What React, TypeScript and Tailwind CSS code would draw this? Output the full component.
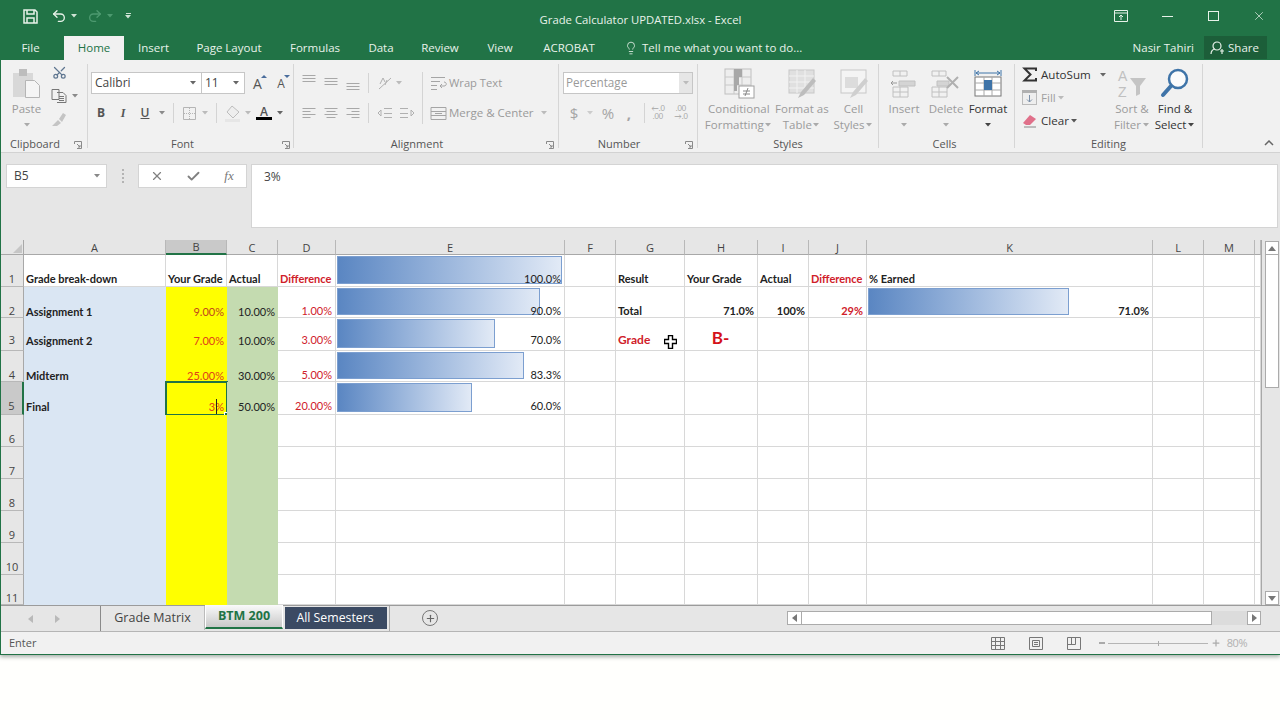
import React from "react";
import { Undo2, Redo2, Lightbulb, Scissors, X, Check, Plus } from "lucide-react";

const UI = "font-['Open_Sans','Noto_Sans',sans-serif]";
const CAL = "font-['Lato','Carlito',sans-serif]";

function Caret({ c = "#8a8a8a", w = 10 }: { c?: string; w?: number }) {
  return (
    <span className="inline-flex justify-center shrink-0" style={{ width: w }}>
      <svg width="6" height="4" viewBox="0 0 6 4"><path d="M0 0h6L3 3.5z" fill={c} /></svg>
    </span>
  );
}
function Slot({ w = 22, children }: { w?: number; children?: React.ReactNode }) {
  return <span className="inline-flex items-center justify-center shrink-0" style={{ width: w }}>{children}</span>;
}
function VDiv({ ml = 0, mr = 0, h = 20 }: { ml?: number; mr?: number; h?: number }) {
  return <span className="w-px bg-[#d4d4d4] shrink-0" style={{ marginLeft: ml, marginRight: mr, height: h }} />;
}
function Lines({ type }: { type: "l" | "c" | "r" | "t" | "m" | "b" }) {
  const s = "#a8a8a8";
  const v: Record<string, React.ReactNode> = {
    t: <path d="M1.5 .5h13M1.5 3.5h13M1.5 6.5h13" />,
    m: <path d="M1.5 3.5h13M1.5 6.5h13M1.5 9.5h13" />,
    b: <path d="M1.5 8.5h13M1.5 11.5h13M1.5 14.5h13" />,
    l: <path d="M1.5 3.5h13M1.5 6.5h8M1.5 9.5h13M1.5 12.5h8" />,
    c: <path d="M1.5 3.5h13M3.5 6.5h9M1.5 9.5h13M3.5 12.5h9" />,
    r: <path d="M1.5 3.5h13M6.5 6.5h8M1.5 9.5h13M6.5 12.5h8" />,
  };
  return <svg width="16" height="16" viewBox="0 0 16 16" fill="none" stroke={s}>{v[type]}</svg>;
}
function Launcher() {
  return (
    <svg width="8" height="8" viewBox="0 0 8 8" fill="none" stroke="#8a8a8a">
      <path d="M.5 3V.5h7v7H3" /><path d="M3 3l3 3M6 4v2H4" />
    </svg>
  );
}
function Group({ w, label, launcher, lr = 4, lp = 0, children }: { w: number; label: string; launcher?: boolean; lr?: number; lp?: number; children: React.ReactNode }) {
  return (
    <div className="relative shrink-0 h-[84px] mt-[4px] flex flex-col border-r border-[#d6d6d6]" style={{ width: w }}>
      <div className="h-[71px] flex">{children}</div>
      <div className={`h-[13px] leading-[18px] text-center text-[11px] text-[#555] ${UI}`} style={{ paddingRight: lp }}>{label}</div>
      {launcher && <span className="absolute bottom-[-1px]" style={{ right: lr }}><Launcher /></span>}
    </div>
  );
}
function Big({ w, icon, lines, caret, dark }: { w: number; icon: React.ReactNode; lines: string[]; caret?: boolean; dark?: boolean }) {
  return (
    <div className={`shrink-0 flex flex-col items-center text-[11.5px] leading-[16px] ${dark ? "text-[#333]" : "text-[#9b9b9b]"}`} style={{ width: w }}>
      <div className="h-[35px] mt-[2px] flex items-center justify-center">{icon}</div>
      {lines.map((l, i) => (
        <div key={i} className="whitespace-nowrap flex items-center h-[16px]">
          {l}{caret && i === lines.length - 1 && <Caret w={9} c={dark ? "#444" : "#aaa"} />}
        </div>
      ))}
    </div>
  );
}
function TableIcon({ children }: { children?: React.ReactNode }) {
  return <svg width="32" height="32" viewBox="0 0 32 32" fill="none">{children}</svg>;
}

function Ribbon() {
  const ro = "h-[22px] flex items-center";
  return (
    <div className={`h-[93px] shrink-0 bg-[#f1f1f1] border-b border-[#d2d2d2] flex ${UI}`}>
      {/* Clipboard */}
      <Group w={87} label="Clipboard" launcher lr={5} lp={18}>
        <div className="w-[1px]" />
        <Big w={49} lines={["Paste", ""]} caret icon={
          <svg width="30" height="32" viewBox="0 0 30 32">
            <rect x="1" y="5" width="20" height="24" fill="#d8d8d8" />
            <rect x="7" y="1" width="8" height="7" fill="#bdbdbd" />
            <path d="M13.5 12.5h9l5 5v12h-14z" fill="#f5f5f5" stroke="#b5b5b5" />
          </svg>} />
        <div className="flex flex-col pt-[1px] -ml-[3px]">
          <Slot w={22}><Scissors size={15} color="#5f7690" className="-rotate-90" /></Slot>
          <div className="flex items-center mt-[9px]">
            <Slot w={22}><svg width="16" height="14" viewBox="0 0 16 14" fill="none" stroke="#777"><path d="M1 .5h7v10H1zM6 3.5h6l3 3v7H6" fill="#f1f1f1" /><path d="M8 7.5h5M8 9.5h5M8 11.5h5" /></svg></Slot>
            <Caret />
          </div>
          <Slot w={22}><svg className="mt-[8px]" width="16" height="16" viewBox="0 0 16 16"><path d="M1 15l6-6 3 3-4 3zM8 8l4-6 3 2-4 7z" fill="#c4c4c4" /></svg></Slot>
        </div>
      </Group>
      {/* Font */}
      <Group w={206} label="Font" launcher lr={3} lp={16}>
        <div className="pt-[8px] pl-[3px] flex flex-col gap-[8px]">
          <div className={ro}>
            <div className="w-[111px] h-[22px] bg-white border border-[#c6c6c6] flex items-center justify-between pl-[3px] pr-[3px] text-[12px] text-[#444]">Calibri<Caret c="#666" /></div>
            <div className="w-[43px] h-[22px] bg-white border border-l-0 border-[#c6c6c6] flex items-center justify-between pl-[3px] pr-[3px] text-[12px] text-[#444]">11<Caret c="#666" /></div>
            <Slot w={25}><span className="text-[14px] text-[#555] relative">A<span className="absolute -right-[5px] top-[2px] w-0 h-0 border-x-[3px] border-x-transparent border-b-[3px] border-b-[#4a6d9c]" /></span></Slot>
            <Slot w={22}><span className="text-[12px] text-[#555] relative top-[1px]">A<span className="absolute -right-[5px] top-[0px] w-0 h-0 border-x-[3px] border-x-transparent border-t-[3px] border-t-[#4a6d9c]" /></span></Slot>
          </div>
          <div className={`${ro} -ml-[1px]`}>
            <Slot><b className="text-[12px] text-[#555]">B</b></Slot>
            <Slot><i className="text-[12px] font-semibold text-[#555] font-['Liberation_Serif',serif]">I</i></Slot>
            <Slot><u className="text-[12px] font-semibold text-[#555]">U</u></Slot>
            <Caret w={12} />
            <VDiv ml={5} mr={5} />
            <Slot w={20}><svg width="13" height="13" viewBox="0 0 13 13" fill="none" stroke="#b5b5b5"><path d="M.5.5h12v12H.5z" /><path d="M6.5 1v11M1 6.5h11" strokeDasharray="1 1" /></svg></Slot>
            <Caret w={12} c="#bbb" />
            <VDiv ml={5} mr={6} />
            <Slot w={20}><svg width="16" height="17" viewBox="0 0 16 17"><path d="M7 1l7 6-6 6-6-6z" fill="#eee" stroke="#bdbdbd" /><rect x="0" y="14" width="15" height="3" fill="#e6e6e6" /></svg></Slot>
            <Caret w={10} c="#bbb" />
            <Slot w={22}>
              <span className="flex flex-col items-center">
                <span className="text-[12px] font-semibold leading-[11px] text-[#555]">A</span>
                <span className="w-[16px] h-[3px] bg-black" />
              </span>
            </Slot>
            <Caret w={10} c="#666" />
          </div>
        </div>
      </Group>
      {/* Alignment */}
      <Group w={265} label="Alignment" launcher lr={4} lp={18}>
        <div className="pt-[8px] pl-[4px] w-[128px] flex flex-col gap-[8px]">
          <div className={ro}>
            <Slot><Lines type="t" /></Slot><Slot><Lines type="m" /></Slot><Slot><Lines type="b" /></Slot>
            <VDiv ml={4} mr={5} />
            <Slot><svg width="16" height="16" viewBox="0 0 16 16" fill="none" stroke="#b0b0b0"><path d="M2 14L14 3" /><path d="M3 9l3-6 2 4M8 10l2-5" /></svg></Slot>
            <Caret w={6} c="#bbb" />
          </div>
          <div className={ro}>
            <Slot><Lines type="l" /></Slot><Slot><Lines type="c" /></Slot><Slot><Lines type="r" /></Slot>
            <VDiv ml={4} mr={5} />
            <Slot><svg width="16" height="14" viewBox="0 0 16 14" fill="none" stroke="#b0b0b0"><path d="M7 2.5h8M7 7.5h8M7 11.5h8M1 7l3-3v6z" /></svg></Slot>
            <Slot><svg width="16" height="14" viewBox="0 0 16 14" fill="none" stroke="#b0b0b0"><path d="M1 2.5h8M1 7.5h8M1 11.5h8M15 7l-3-3v6z" /></svg></Slot>
          </div>
        </div>
        <div className="mt-[8px] h-[52px] w-px bg-[#d4d4d4]" />
        <div className="pt-[8px] pl-[7px] flex flex-col gap-[8px] text-[#9a9a9a] whitespace-nowrap">
          <div className={`${ro} text-[11.2px]`}>
            <svg className="mr-[2px]" width="17" height="15" viewBox="0 0 17 15" fill="none" stroke="#a5a5a5"><path d="M1 1.5h14M1 5.5h9M1 9.5h6M1 13.5h6M10 10h4c3 0 3-4 0-4M12 8l-2 2 2 2" /></svg>
            Wrap Text
          </div>
          <div className={`${ro} text-[11.5px]`}>
            <svg className="mr-[2px]" width="17" height="15" viewBox="0 0 17 15" fill="none" stroke="#a5a5a5"><path d="M1 1.5h15v12H1zM1 5.5h15M1 9.5h15M5 7.5h7" /></svg>
            Merge &amp; Center
            <Caret w={20} c="#bbb" />
          </div>
        </div>
      </Group>
      {/* Number */}
      <Group w={139} label="Number" launcher lr={4} lp={18}>
        <div className="pt-[8px] pl-[4px] flex flex-col gap-[8px]">
          <div className="w-[130px] h-[22px] bg-white border border-[#c6c6c6] flex items-center justify-between pl-[2px] text-[11.7px] text-[#9a9a9a]">
            Percentage
            <span className="w-[13px] h-full bg-[#e6e6e6] flex items-center justify-center"><Caret w={6} c="#bbb" /></span>
          </div>
          <div className={`${ro} text-[#a5a5a5]`}>
            <Slot w={22}><span className="text-[15px] leading-none">$</span></Slot>
            <Caret w={10} c="#ccc" />
            <Slot w={26}><span className="text-[15px] leading-none">%</span></Slot>
            <Slot w={16}><span className="text-[15px] font-bold leading-none">,</span></Slot>
            <VDiv ml={7} mr={1} />
            <Slot w={24}><span className={`text-[7.5px] leading-[8px] text-center ${CAL}`}>←.0<br />.00</span></Slot>
            <Slot w={22}><span className={`text-[7.5px] leading-[8px] text-center ${CAL}`}>.00<br />→.0</span></Slot>
          </div>
        </div>
      </Group>
      {/* Styles */}
      <Group w={181} label="Styles">
        <div className="w-[1px]" />
        <Big w={80} lines={["Conditional", "Formatting"]} caret icon={
          <TableIcon>
            <rect x="2" y="1" width="26" height="25" fill="#eee" stroke="#c0c0c0" />
            <path d="M2 9h26M2 17h26M11 1v25M19 1v25" stroke="#c8c8c8" />
            <path d="M11 1h8v8h-8zM11 9h5v8h-5zM11 17h3v6h-3z" fill="#a8a8a8" />
            <rect x="16" y="18" width="15" height="12" fill="#fff" stroke="#a0a0a0" />
            <path d="M20 23h7M20 26h7M25 20l-3 8" stroke="#888" />
          </TableIcon>} />
        <Big w={46} lines={["Format as", "Table"]} caret icon={
          <TableIcon>
            <rect x="3" y="2" width="25" height="23" fill="#e0e0e0" stroke="#c8c8c8" />
            <path d="M3 8h25M3 14h25M3 20h25M11 2v23M19 2v23" stroke="#f2f2f2" />
            <path d="M30 13L18 27l-6 3 3-6 12-14z" fill="#bdbdbd" />
          </TableIcon>} />
        <div className="w-[5px]" />
        <Big w={49} lines={["Cell", "Styles"]} caret icon={
          <TableIcon>
            <rect x="3" y="2" width="25" height="23" fill="#f4f4f4" stroke="#c8c8c8" />
            <rect x="7" y="9" width="13" height="11" fill="#dcdcdc" />
            <path d="M30 13L18 27l-6 3 3-6 12-14z" fill="#cfcfcf" />
          </TableIcon>} />
      </Group>
      {/* Cells */}
      <Group w={136} label="Cells" lp={4}>
        <Big w={50} caret lines={["Insert", ""]} icon={
          <TableIcon>
            <path d="M5 3h14v5H5zM12 3v5M5 19h15v10H5zM5 24h15M12 19v10" stroke="#c0c0c0" fill="none" />
            <path d="M11 13h16v5H11z" fill="#d4d4d4" stroke="#c0c0c0" /><path d="M3 15h6M5 13l-2 2 2 2" stroke="#999" fill="none" />
          </TableIcon>} />
        <Big w={34} caret lines={["Delete", ""]} icon={
          <TableIcon>
            <path d="M2 3h14v5H2zM9 3v5M2 19h15v10H2zM2 24h15M9 19v10" stroke="#c0c0c0" fill="none" />
            <path d="M7 13h12v5H7z" fill="#d4d4d4" stroke="#c0c0c0" /><path d="M17 9l11 11M28 9L17 20" stroke="#b0b0b0" strokeWidth="2" />
          </TableIcon>} />
        <Big w={50} dark caret lines={["Format", ""]} icon={
          <TableIcon>
            <path d="M3 2v6M29 2v6M4 5h24M4 5l3-2M4 5l3 2M28 5l-3-2M28 5l-3 2" stroke="#3f74a8" fill="none" />
            <rect x="3" y="9" width="26" height="19" fill="#fff" stroke="#777" />
            <path d="M12 9v19M20 9v19M3 15h26M3 22h26" stroke="#a8a8a8" />
            <rect x="12" y="12" width="8" height="10" fill="#3f74a8" />
          </TableIcon>} />
      </Group>
      {/* Editing */}
      <Group w={188} label="Editing">
        <div className="w-[96px] shrink-0 pl-[7px] -mt-[1px] text-[11.6px] flex flex-col whitespace-nowrap">
          <div className="h-[23px] flex items-center text-[#333]">
            <span className="w-[19px] shrink-0">
              <svg width="15" height="15" viewBox="0 0 15 15" fill="none" stroke="#333" strokeWidth="2"><path d="M14 4V1.5H2.5L8.5 7.5 2.5 13.5H14V11" /></svg>
            </span>
            AutoSum
            <Caret w={24} c="#666" />
          </div>
          <div className="h-[23px] flex items-center text-[#a0a0a0]">
            <span className="w-[19px] shrink-0">
              <svg width="15" height="15" viewBox="0 0 15 15"><rect x=".5" y=".5" width="14" height="14" fill="#eee" stroke="#bbb" /><rect width="15" height="3" fill="#b0b0b0" /><path d="M7.5 5v7M5 9.5l2.5 2.5L10 9.5" stroke="#7a8fa8" fill="none" /></svg>
            </span>
            Fill<Caret w={10} c="#bbb" />
          </div>
          <div className="h-[23px] flex items-center text-[#333]">
            <span className="w-[19px] shrink-0">
              <svg width="15" height="14" viewBox="0 0 15 14"><path d="M1 9l7-8 6 4-6 6H4z" fill="#e0708a" /><path d="M2 13h12" stroke="#888" /></svg>
            </span>
            Clear<Caret w={10} c="#555" />
          </div>
        </div>
        <Big w={42} lines={["Sort &", "Filter"]} caret icon={
          <svg width="30" height="32" viewBox="0 0 30 32">
            <text x="1" y="13" fontSize="14" fill="#c0c0c0" fontFamily="Liberation Sans">A</text>
            <text x="1" y="29" fontSize="14" fill="#c0c0c0" fontFamily="Liberation Sans">Z</text>
            <path d="M13 10h16l-6 8v8l-4 2V18z" fill="#c4c4c4" />
          </svg>} />
        <Big w={44} dark lines={["Find &", "Select"]} caret icon={
          <svg width="30" height="34" viewBox="0 0 30 34" fill="none">
            <circle cx="18" cy="12" r="9" stroke="#3f74a8" strokeWidth="2.5" fill="#fbfbfb" />
            <path d="M11 19L3 28" stroke="#3f74a8" strokeWidth="4" strokeLinecap="round" />
          </svg>} />
      </Group>
      <div className="flex-1 flex items-end justify-end pr-[6px] pb-[6px]">
        <svg width="10" height="6" viewBox="0 0 10 6" fill="none" stroke="#666" strokeWidth="1.5"><path d="M1 5l4-4 4 4" /></svg>
      </div>
    </div>
  );
}

function TitleBar() {
  return (
    <div className="h-[38px] shrink-0 flex items-center relative text-white">
      <div className="flex items-center pl-[22px] -mt-[6px]">
        <svg width="15" height="15" viewBox="0 0 15 15" fill="none" stroke="#e7f2e9" strokeWidth="1.5"><path d="M1 1h11l2 2v11H1z" /><path d="M4 1v4h7V1M4 14V9h7v5" /></svg>
        <Undo2 size={16} color="#e7f2e9" strokeWidth={2} className="ml-[13px]" />
        <Caret w={14} c="#cfe3d5" />
        <Redo2 size={16} color="#4d9a70" strokeWidth={2} className="ml-[6px]" />
        <Caret w={14} c="#4d9a70" />
        <span className="ml-[8px] flex flex-col items-center gap-[1px]">
          <span className="w-[5px] h-px bg-[#cfe3d5]" />
          <svg width="6" height="4" viewBox="0 0 6 4"><path d="M0 0h6L3 3.5z" fill="#cfe3d5" /></svg>
        </span>
      </div>
      <div className={`flex-1 text-center text-[11.3px] text-[#e8f2ea] pr-[130px] pt-[3px] ${UI}`}>Grade Calculator UPDATED.xlsx - Excel</div>
      <div className="absolute -right-[2px] top-0 h-[32px] flex items-center">
        <Slot w={46}><svg width="14" height="12" viewBox="0 0 14 12" fill="none" stroke="#e7f2e9"><path d="M.5.5h13v11H.5zM.5 3h13M7 10V5M5 7l2-2 2 2" /></svg></Slot>
        <Slot w={46}><span className="w-[11px] h-px bg-[#e7f2e9]" /></Slot>
        <Slot w={46}><span className="w-[11px] h-[10px] border border-[#e7f2e9]" /></Slot>
        <Slot w={46}><X size={14} color="#e7f2e9" strokeWidth={1.2} /></Slot>
      </div>
    </div>
  );
}

function TabRow() {
  const tabs: [string, number][] = [["Insert", 59], ["Page Layout", 92], ["Formulas", 80], ["Data", 52], ["Review", 66], ["View", 54], ["ACROBAT", 84]];
  return (
    <div className={`h-[22px] shrink-0 flex text-[11.5px] text-[#e8f2ea] ${UI}`}>
      <div className="w-[59px] h-[22px] text-center leading-[20px]">File</div>
      <div className="w-[60px] mt-[-2px] h-[24px] ml-[4px] bg-[#f1f1f1] text-[#217346] text-center leading-[24px]">Home</div>
      {tabs.map(([t, w]) => <div key={t} className="h-[22px] text-center leading-[20px] shrink-0" style={{ width: w }}>{t}</div>)}
      <div className="flex items-center h-[20px] pl-[13px]">
        <Lightbulb size={14} color="#e8f2ea" strokeWidth={1.4} />
        <span className="ml-[4px]">Tell me what you want to do...</span>
      </div>
      <div className="flex-1" />
      <div className="h-[20px] leading-[20px] mr-[10px]">Nasir Tahiri</div>
      <div className="w-[63px] h-[23px] -mt-[2px] bg-[#1c5e39] mr-[13px] flex items-center justify-center gap-[3px] pr-[2px]">
        <svg width="15" height="14" viewBox="0 0 15 14" fill="none" stroke="#e8f2ea" strokeWidth="1.2"><circle cx="7" cy="5" r="4" /><path d="M1 13c0-3 2-5 4-5M10 10h4M12 8v5" /></svg>
        Share
      </div>
    </div>
  );
}

function FormulaBar() {
  return (
    <div className={`h-[87px] shrink-0 bg-[#e6e6e6] pt-[11px] flex ${UI}`}>
      <div className="ml-[5px] w-[101px] h-[24px] bg-white border border-[#d4d4d4] flex items-center justify-between pl-[7px] pr-[3px] text-[12px] text-[#444]">B5<Caret c="#888" w={12} /></div>
      <div className="w-[31px] h-[24px] flex items-center justify-center">
        <span className="flex flex-col gap-[2px]"><i className="w-[2px] h-[2px] bg-[#b4b4b4]" /><i className="w-[2px] h-[2px] bg-[#b4b4b4]" /><i className="w-[2px] h-[2px] bg-[#b4b4b4]" /><i className="w-[2px] h-[2px] bg-[#b4b4b4]" /></span>
      </div>
      <div className="w-[109px] h-[24px] bg-white border border-[#d4d4d4] flex items-center pl-[1px]">
        <Slot w={34}><X size={14} color="#808080" strokeWidth={2} /></Slot>
        <Slot w={38}><Check size={15} color="#808080" strokeWidth={3} /></Slot>
        <Slot w={34}><i className="font-['Liberation_Serif',serif] text-[13px] text-[#777]">fx</i></Slot>
      </div>
      <div className="ml-[4px] w-[1027px] h-[64px] bg-white border border-[#d4d4d4] pl-[12px] pt-[3px] text-[12px] text-[#444]">3%</div>
    </div>
  );
}

type CellDef = { t?: string; cls?: string; bar?: number };
const RED = "text-[#d0202a]";
const OR = "text-[#e0401a]";
const colLetters = ["A", "B", "C", "D", "E", "F", "G", "H", "I", "J", "K", "L", "M", ""];
const rowData: { n: number; pb: string; cells: Record<string, CellDef> }[] = [
  { n: 1, pb: "pb-[1px]", cells: {
    A: { t: "Grade break-down", cls: "font-bold" }, B: { t: "Your Grade", cls: "font-bold" }, C: { t: "Actual", cls: "font-bold" }, D: { t: "Difference", cls: `font-bold ${RED}` },
    E: { t: "100.0%", bar: 100, cls: "text-right" }, G: { t: "Result", cls: "font-bold" }, H: { t: "Your Grade", cls: "font-bold" }, I: { t: "Actual", cls: "font-bold" }, J: { t: "Difference", cls: `font-bold ${RED}` }, K: { t: "% Earned", cls: "font-bold" } } },
  { n: 2, pb: "pb-0", cells: {
    A: { t: "Assignment 1", cls: "font-bold" }, B: { t: "9.00%", cls: "text-right text-[#c0461c]" }, C: { t: "10.00%", cls: "text-right" }, D: { t: "1.00%", cls: `text-right ${RED}` },
    E: { t: "90.0%", bar: 90, cls: "text-right" }, G: { t: "Total", cls: "font-bold" }, H: { t: "71.0%", cls: "text-right font-bold -mr-[1px]" }, I: { t: "100%", cls: "text-right font-bold -mr-[1px]" }, J: { t: "29%", cls: `text-right font-bold -mr-[1px] ${RED}` }, K: { t: "71.0%", bar: 71, cls: "text-right font-bold -mr-[2px]" } } },
  { n: 3, pb: "pb-[4px]", cells: {
    A: { t: "Assignment 2", cls: "font-bold" }, B: { t: "7.00%", cls: `text-right ${OR}` }, C: { t: "10.00%", cls: "text-right" }, D: { t: "3.00%", cls: `text-right ${RED}` },
    E: { t: "70.0%", bar: 70, cls: "text-right" }, G: { t: "Grade", cls: `font-bold text-[12px] ${RED}` }, H: { t: "B-", cls: "text-center font-bold text-[17px] leading-[16px] text-[#d4111a]" } } },
  { n: 4, pb: "pb-0", cells: {
    A: { t: "Midterm", cls: "font-bold" }, B: { t: "25.00%", cls: `text-right ${OR}` }, C: { t: "30.00%", cls: "text-right" }, D: { t: "5.00%", cls: `text-right ${RED}` }, E: { t: "83.3%", bar: 83.3, cls: "text-right" } } },
  { n: 5, pb: "pb-[2px]", cells: {
    A: { t: "Final", cls: "font-bold" }, B: { t: "3%", cls: `text-right ${OR}` }, C: { t: "50.00%", cls: "text-right" }, D: { t: "20.00%", cls: `text-right ${RED}` }, E: { t: "60.0%", bar: 60, cls: "text-right" } } },
  ...[6, 7, 8, 9, 10, 11].map((n) => ({ n, pb: n === 11 ? "pb-0" : "pb-[1px]", cells: {} as Record<string, CellDef> })),
];
const barWidths: Record<string, number> = { E: 225, K: 283 };

function Sheet() {
  return (
    <div className="flex-1 min-w-0 bg-white grid grid-cols-[23px_142px_61px_51px_58px_229px_51px_69px_73px_51px_58px_286px_51px_51px_6px] grid-rows-[15px_32px_31px_33px_31px_33px_32px_32px_32px_32px_32px_30px] border-r border-[#a8a8a8] overflow-hidden">
      <div className="bg-[#e6e6e6] border-r border-b border-[#a8a8a8] flex items-end justify-end pr-[1px] pb-[1px]">
        <span className="w-0 h-0 border-l-[9px] border-l-transparent border-b-[9px] border-b-[#c6c6c6]" />
      </div>
      {colLetters.map((c, i) => (
        <div key={i} className={`flex items-center justify-center text-[11px] leading-[13px] text-[#444] border-r border-r-[#b8b8b8] ${UI} ${c === "B" ? "bg-[#c9c9c9] border-b-2 border-b-[#217346]" : "bg-[#e6e6e6] border-b border-b-[#a8a8a8]"}`}>{c}</div>
      ))}
      {rowData.map((r) => (
        <React.Fragment key={r.n}>
          <div className={`flex items-end justify-center text-[11px] text-[#444] border-b border-[#b8b8b8] ${r.pb} ${UI} ${r.n === 5 ? "bg-[#c9c9c9] border-r-2 border-r-[#217346]" : "bg-[#e6e6e6] border-r border-r-[#a8a8a8]"}`}>
            <span className="leading-[12px]">{r.n}</span>
          </div>
          {colLetters.map((c, i) => {
            const d = r.cells[c] || {};
            const filled = r.n > 1 && (c === "A" || c === "B" || c === "C");
            const bg = !filled ? "bg-white border-r border-b border-[#d8d8d8]" : c === "A" ? "bg-[#dae6f3]" : c === "B" ? "bg-[#ffff00]" : "bg-[#c4dbb0]";
            return (
              <div key={i} className={`relative flex items-end text-[11px] text-[#222] whitespace-nowrap pl-[2px] pr-[3px] ${CAL} ${bg} ${r.pb}`}>
                {d.bar !== undefined && (
                  <span className="absolute left-[1px] top-[1px] bottom-[2px] border border-[#7c9fd0] bg-gradient-to-r from-[#5a86c2] to-[#e2eaf6]" style={{ width: Math.round(barWidths[c] * d.bar / 100) }} />
                )}
                <span className={`relative w-full leading-[12px] ${d.cls || ""}`}>{d.t}</span>
                {c === "B" && r.n === 5 && (
                  <>
                    <span className="absolute -left-[1px] -top-[1px] -right-[1px] -bottom-[1px] border-2 border-[#217346]" />
                    <span className="absolute right-[10px] bottom-[1px] w-px h-[15px] bg-[#222]" />
                    <span className="absolute -right-[2px] -bottom-[2px] w-[5px] h-[5px] bg-[#217346] border border-white" />
                  </>
                )}
                {c === "G" && r.n === 3 && (
                  <svg className="absolute left-[48px] top-[17px]" width="13" height="14" viewBox="0 0 13 14"><path d="M4.5.5h4v4h4v4h-4v5h-4v-5h-4v-4h4z" fill="#fff" stroke="#000" strokeWidth="1.4" /></svg>
                )}
              </div>
            );
          })}
        </React.Fragment>
      ))}
    </div>
  );
}

function Arrow({ d }: { d: "u" | "d" | "l" | "r" }) {
  const p = { u: "M0 5h8L4 0z", d: "M0 0h8L4 5z", l: "M5 0v8L0 4z", r: "M0 0v8l5-4z" }[d];
  const wh = d === "u" || d === "d" ? [8, 5] : [5, 8];
  return <svg width={wh[0]} height={wh[1]} viewBox={`0 0 ${wh[0]} ${wh[1]}`}><path d={p} fill="#777" /></svg>;
}

function VScroll() {
  return (
    <div className="w-[18px] shrink-0 bg-[#e6e6e6] pl-[3px] pr-[1px] pt-[1px] flex flex-col">
      <div className="h-[14px] bg-white border border-[#ababab] flex items-center justify-center shrink-0"><Arrow d="u" /></div>
      <div className="h-[133px] bg-white border-x border-b border-[#ababab] shrink-0" />
      <div className="flex-1" />
      <div className="h-[14px] bg-white border border-[#ababab] flex items-center justify-center shrink-0"><Arrow d="d" /></div>
    </div>
  );
}

function SheetTabs() {
  return (
    <div className={`h-[27px] shrink-0 bg-[#e6e6e6] border-t border-b border-t-[#9b9b9b] border-b-[#b5b5b5] flex items-start ${UI}`}>
      <div className="w-[100px] flex items-center h-[25px] pl-[27px] gap-[22px] shrink-0 border-r border-[#8a8a8a]">
        <span className="opacity-40 flex gap-[22px]"><Arrow d="l" /><Arrow d="r" /></span>
      </div>
      <div className="w-[104px] h-[24px] text-[12.5px] text-[#444] flex items-center justify-center border-r border-[#bbb] shrink-0">Grade Matrix</div>
      <div className="w-[78px] h-[24px] -mt-[1px] border-x border-white bg-gradient-to-b from-[#fafafa] to-[#c9c9c9] border-b-2 border-b-[#217346] text-[12.5px] font-bold text-[#217346] flex items-center justify-center shrink-0">BTM 200</div>
      <div className="w-[102px] h-[22px] mt-[1px] ml-[2px] bg-[#3b4a63] text-[12.3px] text-white flex items-center justify-center shrink-0 pr-[2px]">All Semesters</div>
      <div className="w-px h-[25px] bg-[#aaa] ml-[2px] shrink-0" />
      <div className="ml-[32px] mt-[4px] w-[16px] h-[16px] rounded-full border border-[#777] flex items-center justify-center shrink-0"><Plus size={11} color="#666" strokeWidth={2.5} /></div>
      <div className="ml-[349px] mt-[5px] w-[474px] h-[14px] flex shrink-0">
        <div className="w-[15px] bg-white border border-[#ababab] flex items-center justify-center"><Arrow d="l" /></div>
        <div className="w-[410px] bg-white border-y border-r border-[#ababab]" />
        <div className="flex-1 bg-[#dcdcdc]" />
        <div className="w-[14px] bg-white border border-[#ababab] flex items-center justify-center"><Arrow d="r" /></div>
      </div>
    </div>
  );
}

function StatusBar() {
  return (
    <div className={`h-[22px] shrink-0 bg-[#f1f1f1] flex items-center text-[11px] ${UI}`}>
      <span className="ml-[8px] text-[#555]">Enter</span>
      <div className="flex-1" />
      <svg width="14" height="13" viewBox="0 0 14 13" fill="none" stroke="#777"><path d="M.5.5h13v12H.5zM.5 4.5h13M.5 8.5h13M4.5.5v12M9.5.5v12" /></svg>
      <svg className="ml-[24px]" width="14" height="13" viewBox="0 0 14 13" fill="none" stroke="#777"><path d="M.5.5h13v12H.5zM3.5 3.5h7v6h-7zM5 5.5h4M5 7.5h4" /></svg>
      <svg className="ml-[24px]" width="14" height="13" viewBox="0 0 14 13" fill="none" stroke="#777"><path d="M.5.5h13v12H.5zM.5 7.5h8M4.5.5v7M8.5.5v7" /></svg>
      <span className="ml-[18px] w-[6px] h-[2px] bg-[#aaa]" />
      <span className="relative ml-[3px] w-[100px] h-px bg-[#b5b5b5]"><i className="absolute left-1/2 -top-[2px] w-px h-[5px] bg-[#aaa]" /></span>
      <span className="ml-[3px]"><Plus size={10} color="#aaa" strokeWidth={3} /></span>
      <span className="ml-[6px] mr-[33px] text-[#b0b0b0] tracking-[-0.5px]">80%</span>
    </div>
  );
}

export default function App() {
  return (
    <div className="h-[720px] w-[1280px] overflow-hidden bg-[#fffffd]">
      <div className="h-[655px] bg-[#217346] border-l border-b border-[#217346] shadow-[0_2px_4px_rgba(60,80,70,0.45)] flex flex-col">
        <TitleBar />
        <TabRow />
        <Ribbon />
        <FormulaBar />
        <div className="h-[365px] shrink-0 flex bg-[#e6e6e6]">
          <Sheet />
          <VScroll />
        </div>
        <SheetTabs />
        <StatusBar />
      </div>
    </div>
  );
}
